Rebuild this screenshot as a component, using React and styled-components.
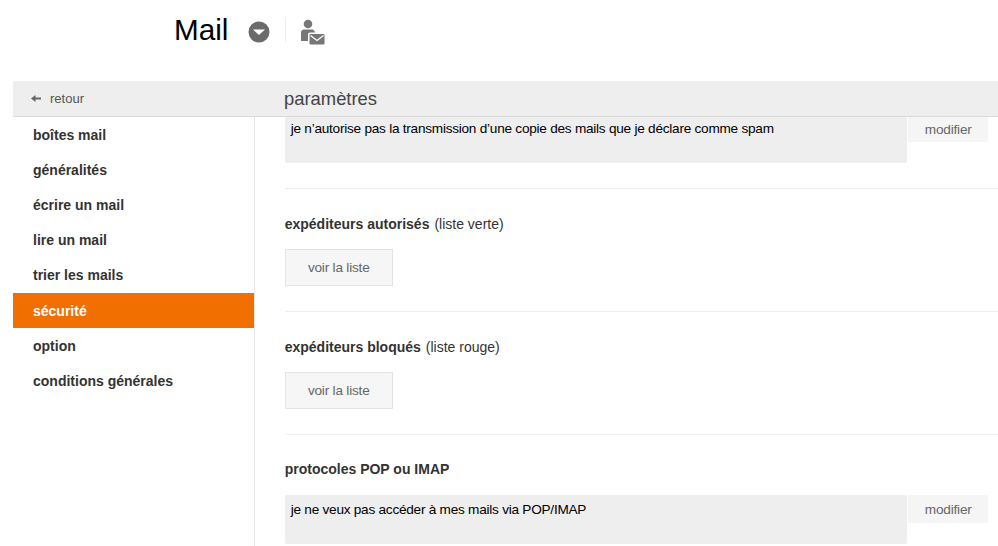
import styled, { createGlobalStyle } from "styled-components";

const GlobalStyle = createGlobalStyle`
  html, body {
    margin: 0;
    padding: 0;
    background: #fff;
    overflow: hidden;
  }
  body {
    font-family: "Liberation Sans", Arial, sans-serif;
    color: #333;
  }
`;

const Page = styled.div`
  width: 998px;
  height: 546px;
  overflow: hidden;
`;

const Header = styled.header`
  height: 81px;
  display: flex;
  align-items: flex-start;
  padding-left: 174px;
`;

const AppTitle = styled.h1`
  margin: 13px 0 0;
  font-size: 29.7px;
  line-height: 34px;
  font-weight: 400;
  color: #000;
`;

const DropButton = styled.span`
  display: block;
  margin: 21px 0 0 20px;
  width: 22px;
  height: 22px;
`;

const Divider = styled.span`
  display: block;
  margin: 17px 0 0 15px;
  width: 1px;
  height: 25px;
  background: #eee;
`;

const UserMail = styled.span`
  display: block;
  margin: 19px 0 0 14px;
  width: 25px;
  height: 26px;
`;

const Body = styled.div`
  margin-left: 13px;
`;

const TopBar = styled.div`
  height: 35px;
  display: flex;
  align-items: center;
  background: #eee;
  border-bottom: 1px solid #d9d9d9;
`;

const BackLink = styled.div`
  width: 271px;
  display: flex;
  align-items: center;
  gap: 9px;
  padding-left: 18px;
  box-sizing: border-box;
  font-size: 13px;
  color: #555;
`;

const BarTitle = styled.div`
  font-size: 18.4px;
  color: #444;
  padding-top: 1px;
`;

const Columns = styled.div`
  display: flex;
  height: 430px;
`;

const Sidebar = styled.nav`
  width: 242px;
  flex: none;
  box-sizing: border-box;
  border-right: 1px solid #e6e6e6;
`;

const NavItem = styled.div`
  height: 35.2px;
  display: flex;
  align-items: center;
  padding-left: 20px;
  font-size: 14px;
  font-weight: 700;
  color: ${(props) => (props.$active ? "#fff" : "#333")};
  background: ${(props) => (props.$active ? "#f16e00" : "transparent")};
`;

const Content = styled.main`
  flex: 1;
  padding-left: 29.7px;
`;

const Section = styled.section`
  border-bottom: ${(props) => (props.$last ? "none" : "1px solid #eee")};
  padding: ${(props) => props.$pad || "26px 0 25.5px"};
`;

const SectionTitle = styled.div`
  font-size: 14px;
  line-height: 18px;
  color: #333;
  margin-bottom: ${(props) => props.$gap || 16}px;
  font-weight: 700;
`;

const TitleNote = styled.span`
  margin-left: 5px;
  font-weight: 400;
`;

const SettingRow = styled.div`
  display: flex;
  align-items: flex-start;
`;

const SettingBox = styled.div`
  width: 622.3px;
  height: ${(props) => props.$height}px;
  box-sizing: border-box;
  padding: ${(props) => props.$top}px 6px 0;
  background: #eee;
  border-radius: 2px;
  font-size: 13.6px;
  letter-spacing: -0.24px;
  line-height: 18px;
  color: #000;
`;

const ModifyButton = styled.div`
  width: 79.5px;
  height: ${(props) => props.$height}px;
  margin-left: 1.5px;
  display: flex;
  align-items: center;
  justify-content: center;
  background: #f5f5f5;
  font-size: 13.6px;
  letter-spacing: -0.2px;
  color: #666;
`;

const ListButton = styled.div`
  width: 108px;
  height: 36.5px;
  box-sizing: border-box;
  display: flex;
  align-items: center;
  justify-content: center;
  background: #f6f6f6;
  border: 1px solid #e3e3e3;
  font-size: 13.6px;
  letter-spacing: -0.2px;
  color: #666;
`;

const navItems = [
  "boîtes mail",
  "généralités",
  "écrire un mail",
  "lire un mail",
  "trier les mails",
  "sécurité",
  "option",
  "conditions générales",
];

export default function App() {
  return (
    <Page>
      <GlobalStyle />
      <Header>
        <AppTitle>Mail</AppTitle>
        <DropButton>
          <svg width="22" height="22" viewBox="0 0 22 22">
            <circle cx="11" cy="11" r="10.5" fill="#6b6b6b" />
            <path d="M5 8.5h12l-6 5.5z" fill="#fff" />
          </svg>
        </DropButton>
        <Divider />
        <UserMail>
          <svg width="25" height="26" viewBox="0 0 25 26">
            <circle cx="8" cy="5" r="4.3" fill="#777" />
            <path d="M1 22V13.5C1 11.5 2.5 10.5 4 10.5h8c1.5 0 2.5 1 3 3H10a2 2 0 0 0-2 2V22z" fill="#777" />
            <rect x="9.5" y="15" width="15" height="10.5" rx="1" fill="#777" />
            <path d="M10.5 16.5l6.5 5 6.5-5" fill="none" stroke="#fff" strokeWidth="1.2" />
          </svg>
        </UserMail>
      </Header>
      <Body>
        <TopBar>
          <BackLink>
            <svg width="10" height="9" viewBox="0 0 10 9">
              <path d="M0 4.5L4.5 1V3.4H10V5.6H4.5V8z" fill="#666" />
            </svg>
            retour
          </BackLink>
          <BarTitle>paramètres</BarTitle>
        </TopBar>
        <Columns>
          <Sidebar>
            {navItems.map((item) => (
              <NavItem key={item} $active={item === "sécurité"}>
                {item}
              </NavItem>
            ))}
          </Sidebar>
          <Content>
            <Section $pad="0 0 25px">
              <SettingRow>
                <SettingBox $height={46} $top={3}>
                  je n’autorise pas la transmission d’une copie des mails que je déclare comme spam
                </SettingBox>
                <ModifyButton $height={25}>modifier</ModifyButton>
              </SettingRow>
            </Section>
            <Section>
              <SectionTitle>
                expéditeurs autorisés
                <TitleNote>(liste verte)</TitleNote>
              </SectionTitle>
              <ListButton>voir la liste</ListButton>
            </Section>
            <Section>
              <SectionTitle>
                expéditeurs bloqués
                <TitleNote>(liste rouge)</TitleNote>
              </SectionTitle>
              <ListButton>voir la liste</ListButton>
            </Section>
            <Section $pad="25px 0 0" $last>
              <SectionTitle $gap={17}>protocoles POP ou IMAP</SectionTitle>
              <SettingRow>
                <SettingBox $height={49} $top={5.5}>
                  je ne veux pas accéder à mes mails via POP/IMAP
                </SettingBox>
                <ModifyButton $height={28}>modifier</ModifyButton>
              </SettingRow>
            </Section>
          </Content>
        </Columns>
      </Body>
    </Page>
  );
}
